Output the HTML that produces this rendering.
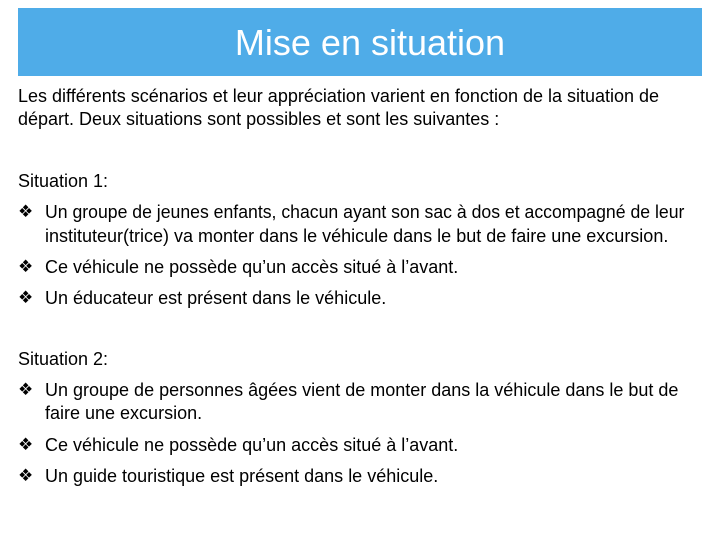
<!DOCTYPE html>
<html><head><meta charset="utf-8"><style>
body{margin:0;width:720px;height:540px;background:#fff;position:relative;overflow:hidden;font-family:"Liberation Sans",sans-serif;color:#000}
.bar{position:absolute;left:18px;top:8px;width:684px;height:68px;background:#4FACE8}
.t{position:absolute;left:0;right:0;top:14px;text-align:center;color:#fff;font-size:36px;transform:translateX(10px) scaleX(1.0)}
.l{position:absolute;font-size:18px;white-space:nowrap;transform-origin:0 50%;transform:scaleX(1.0);line-height:22px}
.b{position:absolute;left:18px;font-size:17px;line-height:22px}
</style></head><body>
<div class="bar"><div class="t">Mise en situation</div></div>
<div class="l" style="left:18px;top:85px">Les différents scénarios et leur appréciation varient en fonction de la situation de</div>
<div class="l" style="left:18px;top:108px">départ. Deux situations sont possibles et sont les suivantes :</div>
<div class="l" style="left:18px;top:170px">Situation 1:</div>
<div class="b" style="top:201px">❖</div>
<div class="l" style="left:45px;top:201px;transform:scaleX(0.98)">Un groupe de jeunes enfants, chacun ayant son sac à dos et accompagné de leur</div>
<div class="l" style="left:45px;top:225px">instituteur(trice) va monter dans le véhicule dans le but de faire une excursion.</div>
<div class="b" style="top:256px">❖</div>
<div class="l" style="left:45px;top:256px">Ce véhicule ne possède qu’un accès situé à l’avant.</div>
<div class="b" style="top:287px">❖</div>
<div class="l" style="left:45px;top:287px">Un éducateur est présent dans le véhicule.</div>
<div class="l" style="left:18px;top:348px">Situation 2:</div>
<div class="b" style="top:379px">❖</div>
<div class="l" style="left:45px;top:379px">Un groupe de personnes âgées vient de monter dans la véhicule dans le but de</div>
<div class="l" style="left:45px;top:402px">faire une excursion.</div>
<div class="b" style="top:434px">❖</div>
<div class="l" style="left:45px;top:434px">Ce véhicule ne possède qu’un accès situé à l’avant.</div>
<div class="b" style="top:465px">❖</div>
<div class="l" style="left:45px;top:465px">Un guide touristique est présent dans le véhicule.</div>
</body></html>
